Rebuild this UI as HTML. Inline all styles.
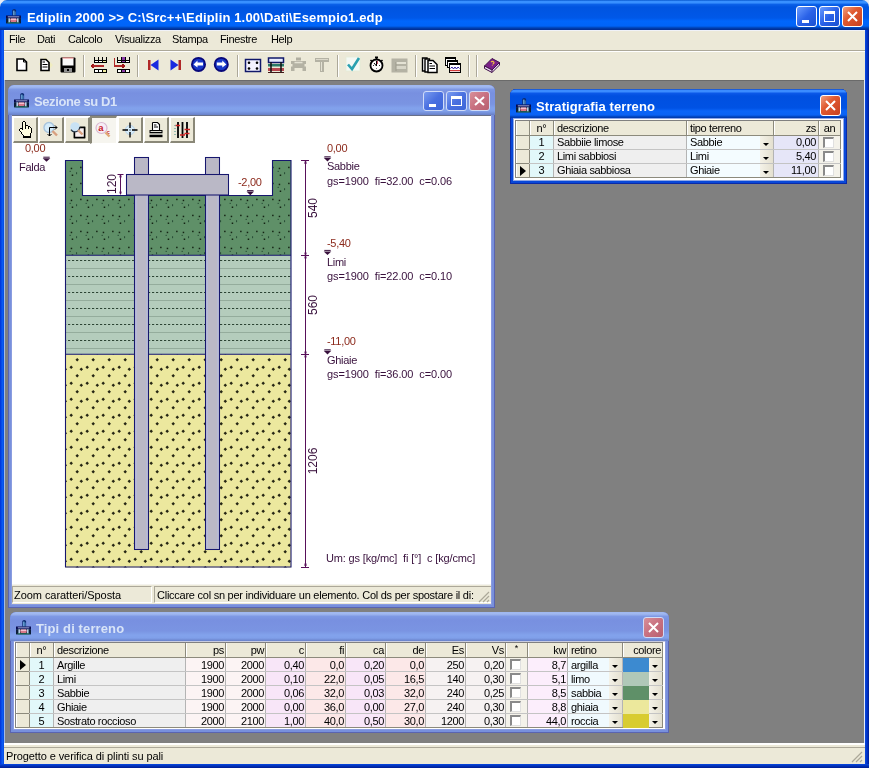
<!DOCTYPE html><html><head><meta charset="utf-8"><style>
*{box-sizing:border-box;margin:0;padding:0}
html,body{width:869px;height:768px;overflow:hidden;background:#808080}
body{position:relative;font-family:"Liberation Sans",sans-serif;font-size:11px;color:#000}
.a{position:absolute}
.t{position:absolute;white-space:nowrap;line-height:13px;will-change:transform}
.m{letter-spacing:-0.35px}
.tt{will-change:transform;position:absolute;white-space:nowrap;color:#fff;font-weight:bold;font-size:13px;line-height:15px}
svg{position:absolute;overflow:visible}
</style></head><body>
<div class="a" style="left:0;top:0;width:869px;height:10px;background:#e8eaf0"></div>
<div class="a" style="left:0;top:0;width:869px;height:30px;border-radius:7px 7px 0 0;background:linear-gradient(#0050c8 0px,#3890ff 1.2px,#3890ff 2.8px,#0a60e8 4.5px,#0054e0 7px,#0058e8 18px,#0066fc 21px,#0064f8 26px,#0040b0 28px,#002a90 30px)"></div>
<div class="a" style="left:0;top:0;width:3px;height:3px;background:#e8ecf8;border-bottom-right-radius:3px"></div>
<div class="a" style="left:0;top:30px;width:4px;height:738px;background:linear-gradient(90deg,#0030d8,#0a5cf4 60%,#0848e0)"></div>
<div class="a" style="left:865px;top:30px;width:4px;height:738px;background:linear-gradient(90deg,#0848e0,#0030c0 60%,#001c90)"></div>
<div class="a" style="left:0;top:764px;width:869px;height:4px;background:linear-gradient(#0848e0,#0030b8,#001c90)"></div>
<svg style="left:6px;top:8.5px" width="16" height="16" viewBox="0 0 16 16">
<path d="M6.3 6.6 V1.6 Q6.3 0 8.2 0 Q10.1 0 10.1 1.6 V6.6Z" fill="#0c2a70"/><rect x="7.3" y="1.6" width="1.1" height="5" fill="#88ccf4"/><rect x="8.7" y="2.5" width="0.8" height="4" fill="#5aa0d8"/>
<rect x="0" y="6.5" width="15" height="2.7" fill="#060a50"/><rect x="1.8" y="7.4" width="11.5" height="0.9" fill="#b0b8e8"/>
<rect x="0" y="9.2" width="15" height="5.2" fill="#0c1e3a"/><rect x="2.4" y="9.3" width="1.6" height="4.2" fill="#b8d0e8"/><rect x="11" y="9.3" width="1.6" height="4.2" fill="#b8d0e8"/>
<rect x="4.3" y="9.4" width="6.4" height="3.6" rx="1" fill="#d87888"/><rect x="4.8" y="9.6" width="5.4" height="1.3" fill="#f8c8d8"/>
<rect x="1.5" y="13.4" width="12" height="1" fill="#2a8060"/></svg>
<div class="tt" style="left:27px;top:10px;letter-spacing:0.15px">Ediplin 2000 &gt;&gt; C:\Src++\Ediplin 1.00\Dati\Esempio1.edp</div>
<div class="a" style="left:796px;top:6px;width:21px;height:21px;border:1px solid #fff;border-radius:3px;background:linear-gradient(135deg,#6a9cff,#2a62e8 50%,#1a50d0)"><div class="a" style="left:5px;top:13px;width:7px;height:3px;background:#fff"></div></div>
<div class="a" style="left:819px;top:6px;width:21px;height:21px;border:1px solid #fff;border-radius:3px;background:linear-gradient(135deg,#6a9cff,#2a62e8 50%,#1a50d0)"><div class="a" style="left:4px;top:4px;width:11px;height:11px;border:1px solid #fff;border-top-width:3px"></div></div>
<div class="a" style="left:842px;top:6px;width:21px;height:21px;border:1px solid #fff;border-radius:3px;background:linear-gradient(135deg,#f0a080,#e05a30 40%,#c84020)"><svg style="left:0;top:0" width="19" height="19"><path d="M5 5 L14 14 M14 5 L5 14" stroke="#fff" stroke-width="2"/></svg></div>
<div class="a" style="left:4px;top:30px;width:861px;height:20px;background:#ece9d8"></div>
<div class="a" style="left:4px;top:30px;width:861px;height:1px;background:#f0f2f8"></div>
<div class="t m" style="left:9px;top:33px">File</div>
<div class="t m" style="left:37px;top:33px">Dati</div>
<div class="t m" style="left:68px;top:33px">Calcolo</div>
<div class="t m" style="left:115px;top:33px">Visualizza</div>
<div class="t m" style="left:172px;top:33px">Stampa</div>
<div class="t m" style="left:220px;top:33px">Finestre</div>
<div class="t m" style="left:271px;top:33px">Help</div>
<div class="a" style="left:4px;top:50px;width:861px;height:1px;background:#aca899"></div>
<div class="a" style="left:4px;top:51px;width:861px;height:1px;background:#fff"></div>
<div class="a" style="left:4px;top:52px;width:861px;height:28px;background:#ece9d8"></div>
<div class="a" style="left:83px;top:55px;width:1px;height:22px;background:#aca899"></div><div class="a" style="left:84px;top:55px;width:1px;height:22px;background:#fff"></div>
<div class="a" style="left:137px;top:55px;width:1px;height:22px;background:#aca899"></div><div class="a" style="left:138px;top:55px;width:1px;height:22px;background:#fff"></div>
<div class="a" style="left:237px;top:55px;width:1px;height:22px;background:#aca899"></div><div class="a" style="left:238px;top:55px;width:1px;height:22px;background:#fff"></div>
<div class="a" style="left:337px;top:55px;width:1px;height:22px;background:#aca899"></div><div class="a" style="left:338px;top:55px;width:1px;height:22px;background:#fff"></div>
<div class="a" style="left:415px;top:55px;width:1px;height:22px;background:#aca899"></div><div class="a" style="left:416px;top:55px;width:1px;height:22px;background:#fff"></div>
<div class="a" style="left:468px;top:55px;width:1px;height:22px;background:#aca899"></div><div class="a" style="left:469px;top:55px;width:1px;height:22px;background:#fff"></div>
<div class="a" style="left:476px;top:55px;width:1px;height:22px;background:#aca899"></div><div class="a" style="left:477px;top:55px;width:1px;height:22px;background:#fff"></div>
<svg style="left:16px;top:58px" width="12" height="14" viewBox="0 0 12 14"><path d="M1 1 H7.5 L10.5 4 V12.5 H1 Z" fill="#fff" stroke="#000" stroke-width="1.6"/><path d="M7.5 1 V4 H10.5" fill="none" stroke="#000" stroke-width="1"/></svg><svg style="left:36px;top:56px" width="18" height="17" viewBox="0 0 18 17"><path d="M9 1 L17 9 L11 16 L3 8Z" fill="#f4f0b0" opacity="0.6"/><path d="M5 3.5 H10 L13 6.5 V14.5 H5 Z" fill="#fff" stroke="#000" stroke-width="1.6"/><path d="M6.5 6 H9 M6.5 8.5 H11.5 M6.5 11 H11.5" stroke="#000" stroke-width="1.2"/></svg><svg style="left:60px;top:57px" width="16" height="16" viewBox="0 0 16 16"><path d="M0.5 1.5 Q0.5 0.5 1.5 0.5 H14.5 Q15.5 0.5 15.5 1.5 V14.5 Q15.5 15.5 14.5 15.5 H1.5 Q0.5 15.5 0.5 14.5Z" fill="#000"/><rect x="2.5" y="1" width="11" height="7.5" fill="#fafafa"/><rect x="2.5" y="0.5" width="11" height="1" fill="#f08080"/><rect x="4" y="11" width="8" height="4" fill="#909090"/><rect x="7" y="12" width="2" height="2" fill="#000"/></svg><svg style="left:90px;top:57px" width="17" height="16" viewBox="0 0 17 16"><g shape-rendering="crispEdges"><rect x="4" y="0" width="1" height="1" fill="#000"/><rect x="8" y="0" width="1" height="1" fill="#000"/><rect x="12" y="0" width="1" height="1" fill="#000"/><rect x="16" y="0" width="1" height="1" fill="#000"/><rect x="4" y="1" width="1" height="1" fill="#000"/><rect x="8" y="1" width="1" height="1" fill="#000"/><rect x="12" y="1" width="1" height="1" fill="#000"/><rect x="16" y="1" width="1" height="1" fill="#000"/><rect x="4" y="2" width="1" height="1" fill="#000"/><rect x="8" y="2" width="1" height="1" fill="#000"/><rect x="12" y="2" width="1" height="1" fill="#000"/><rect x="16" y="2" width="1" height="1" fill="#000"/><rect x="4" y="3" width="13" height="1" fill="#000"/><rect x="4" y="4" width="1" height="1" fill="#000"/><rect x="5" y="4" width="3" height="1" fill="#fff"/><rect x="8" y="4" width="1" height="1" fill="#000"/><rect x="9" y="4" width="3" height="1" fill="#fff"/><rect x="12" y="4" width="1" height="1" fill="#000"/><rect x="13" y="4" width="3" height="1" fill="#f0eca0"/><rect x="16" y="4" width="1" height="1" fill="#000"/><rect x="4" y="5" width="13" height="1" fill="#000"/><rect x="2" y="7" width="2" height="1" fill="#a01818"/><rect x="1" y="8" width="2" height="1" fill="#a01818"/><rect x="3" y="8" width="11" height="1" fill="#b02828"/><rect x="1" y="9" width="2" height="1" fill="#a01818"/><rect x="3" y="9" width="11" height="1" fill="#b02828"/><rect x="2" y="10" width="2" height="1" fill="#a01818"/><rect x="4" y="12" width="13" height="1" fill="#000"/><rect x="4" y="13" width="1" height="1" fill="#000"/><rect x="5" y="13" width="3" height="1" fill="#fff"/><rect x="8" y="13" width="1" height="1" fill="#000"/><rect x="9" y="13" width="3" height="1" fill="#fff"/><rect x="12" y="13" width="1" height="1" fill="#000"/><rect x="13" y="13" width="3" height="1" fill="#f0eca0"/><rect x="16" y="13" width="1" height="1" fill="#000"/><rect x="4" y="14" width="1" height="1" fill="#000"/><rect x="5" y="14" width="3" height="1" fill="#fff"/><rect x="8" y="14" width="1" height="1" fill="#000"/><rect x="9" y="14" width="3" height="1" fill="#fff"/><rect x="12" y="14" width="1" height="1" fill="#000"/><rect x="13" y="14" width="3" height="1" fill="#f0eca0"/><rect x="16" y="14" width="1" height="1" fill="#000"/><rect x="4" y="15" width="13" height="1" fill="#000"/></g></svg><svg style="left:113px;top:57px" width="17" height="16" viewBox="0 0 17 16"><g shape-rendering="crispEdges"><rect x="4" y="0" width="1" height="1" fill="#000"/><rect x="8" y="0" width="1" height="1" fill="#000"/><rect x="9" y="0" width="3" height="1" fill="#8a3aa8"/><rect x="12" y="0" width="1" height="1" fill="#000"/><rect x="16" y="0" width="1" height="1" fill="#000"/><rect x="1" y="1" width="1" height="1" fill="#b02828"/><rect x="4" y="1" width="1" height="1" fill="#000"/><rect x="8" y="1" width="1" height="1" fill="#000"/><rect x="9" y="1" width="3" height="1" fill="#8a3aa8"/><rect x="12" y="1" width="1" height="1" fill="#000"/><rect x="16" y="1" width="1" height="1" fill="#000"/><rect x="1" y="2" width="1" height="1" fill="#b02828"/><rect x="4" y="2" width="1" height="1" fill="#000"/><rect x="8" y="2" width="1" height="1" fill="#000"/><rect x="9" y="2" width="3" height="1" fill="#8a3aa8"/><rect x="12" y="2" width="1" height="1" fill="#000"/><rect x="16" y="2" width="1" height="1" fill="#000"/><rect x="1" y="3" width="1" height="1" fill="#b02828"/><rect x="4" y="3" width="13" height="1" fill="#000"/><rect x="1" y="4" width="1" height="1" fill="#b02828"/><rect x="4" y="4" width="1" height="1" fill="#000"/><rect x="5" y="4" width="3" height="1" fill="#fff"/><rect x="8" y="4" width="1" height="1" fill="#000"/><rect x="9" y="4" width="3" height="1" fill="#8a3aa8"/><rect x="12" y="4" width="1" height="1" fill="#000"/><rect x="13" y="4" width="3" height="1" fill="#fff"/><rect x="16" y="4" width="1" height="1" fill="#000"/><rect x="1" y="5" width="1" height="1" fill="#b02828"/><rect x="4" y="5" width="13" height="1" fill="#000"/><rect x="1" y="6" width="1" height="1" fill="#b02828"/><rect x="1" y="7" width="1" height="1" fill="#b02828"/><rect x="9" y="7" width="2" height="1" fill="#a01818"/><rect x="1" y="8" width="8" height="1" fill="#b02828"/><rect x="9" y="8" width="3" height="1" fill="#a01818"/><rect x="1" y="9" width="8" height="1" fill="#b02828"/><rect x="9" y="9" width="3" height="1" fill="#a01818"/><rect x="9" y="10" width="2" height="1" fill="#a01818"/><rect x="4" y="12" width="13" height="1" fill="#000"/><rect x="4" y="13" width="1" height="1" fill="#000"/><rect x="5" y="13" width="3" height="1" fill="#fff"/><rect x="8" y="13" width="1" height="1" fill="#000"/><rect x="9" y="13" width="3" height="1" fill="#8a3aa8"/><rect x="12" y="13" width="1" height="1" fill="#000"/><rect x="13" y="13" width="3" height="1" fill="#fff"/><rect x="16" y="13" width="1" height="1" fill="#000"/><rect x="4" y="14" width="1" height="1" fill="#000"/><rect x="5" y="14" width="3" height="1" fill="#fff"/><rect x="8" y="14" width="1" height="1" fill="#000"/><rect x="9" y="14" width="3" height="1" fill="#8a3aa8"/><rect x="12" y="14" width="1" height="1" fill="#000"/><rect x="13" y="14" width="3" height="1" fill="#fff"/><rect x="16" y="14" width="1" height="1" fill="#000"/><rect x="4" y="15" width="13" height="1" fill="#000"/></g></svg><svg style="left:147px;top:59px" width="13" height="12" viewBox="0 0 13 12"><rect x="1" y="1" width="2.5" height="10" fill="#b02828"/><path d="M11.5 0.5 V11.5 L3.5 6Z" fill="#1a2ae0"/></svg><svg style="left:169px;top:59px" width="14" height="12" viewBox="0 0 14 12"><rect x="9.5" y="1" width="2.5" height="10" fill="#b02828"/><path d="M1.5 0.5 V11.5 L9.5 6Z" fill="#1a2ae0"/></svg><svg style="left:190px;top:56px" width="17" height="17" viewBox="0 0 17 17"><circle cx="8.5" cy="8.4" r="6.6" fill="#1838c8" stroke="#08087a" stroke-width="1.8"/><path d="M3.5 8.4 L7.5 4.5 V6.5 H13.0 V9.5 H7.5 V11.5Z" fill="#fff"/></svg><svg style="left:213px;top:56px" width="17" height="17" viewBox="0 0 17 17"><circle cx="8.300000000000011" cy="8.4" r="6.6" fill="#1838c8" stroke="#08087a" stroke-width="1.8"/><path d="M13.300000000000011 8.4 L9.300000000000011 4.5 V6.5 H3.8000000000000114 V9.5 H9.300000000000011 V11.5Z" fill="#fff"/></svg><svg style="left:244px;top:58px" width="18" height="15" viewBox="0 0 18 15"><rect x="1.5" y="1.5" width="15" height="12" fill="#f4f2ff" stroke="#10186a" stroke-width="1.5"/><circle cx="5" cy="4.8" r="1.3"/><circle cx="13" cy="4.8" r="1.3"/><circle cx="5" cy="10.5" r="1.3"/><circle cx="13" cy="10.5" r="1.3"/></svg><svg style="left:267px;top:57px" width="18" height="17" viewBox="0 0 18 17"><rect x="1.5" y="1" width="15" height="4.5" fill="#e8ecff" stroke="#10186a" stroke-width="1.5"/><rect x="1" y="7" width="16" height="2.5" fill="#2a7a68"/><rect x="1" y="11" width="16" height="3" fill="#b84850"/><path d="M4 5 V16 M14 5 V16" stroke="#101010" stroke-width="1.5"/><path d="M1 15.5 H17" stroke="#401818" stroke-width="1"/></svg><svg style="left:290px;top:57px" width="17" height="15" viewBox="0 0 17 15"><rect x="6" y="0.5" width="5" height="3" fill="#b0aea0"/><path d="M1 4 H16 V7 H1Z M2.5 7 H14.5 V11 H2.5Z M1 9.5 H4.5 V14 H1Z M12.5 9.5 H16 V14 H12.5Z" fill="#b4b2a4"/><rect x="4.5" y="4.8" width="8" height="1.5" fill="#e4e2d4"/></svg><svg style="left:314px;top:57px" width="16" height="16" viewBox="0 0 16 16"><path d="M1 1 H15 V5 H10 V15 H6 V5 H1Z" fill="#b4b2a4"/><path d="M7.5 5 V14" stroke="#e4e2d4" stroke-width="1"/><path d="M2 2.5 H14" stroke="#e4e2d4" stroke-width="0.8"/></svg><svg style="left:345px;top:56px" width="17" height="16" viewBox="0 0 17 16"><rect x="1" y="1" width="14" height="14" fill="#f4f8f4" stroke="#e4ecd8" stroke-width="0.8"/><path d="M3 8.5 L7 13 L14 2" fill="none" stroke="#2aa0b0" stroke-width="2.6"/></svg><svg style="left:368px;top:56px" width="17" height="17" viewBox="0 0 17 17"><circle cx="8.5" cy="9.5" r="6" fill="#fff" stroke="#000" stroke-width="1.8"/><rect x="7" y="0.5" width="3" height="2" fill="#000"/><rect x="8" y="2" width="1" height="2" fill="#000"/><path d="M2.5 4 L4 5.5 M14.5 4 L13 5.5" stroke="#000" stroke-width="1.5"/><path d="M8.5 5 V10 L6 7" stroke="#000" stroke-width="1" fill="none"/><path d="M9.5 5 V8" stroke="#c02040" stroke-width="0.8"/><path d="M5 9.5 H5.8 M11.2 9.5 H12 M8.5 13 V12.5" stroke="#000" stroke-width="1"/></svg><svg style="left:391px;top:58px" width="17" height="15" viewBox="0 0 17 15"><rect x="0.5" y="0.5" width="16" height="14" fill="#b4b2a4"/><rect x="5" y="4" width="10" height="2" fill="#e4e2d4"/><rect x="5" y="8" width="10" height="3" fill="#d8d6c8"/><path d="M5 4 V13" stroke="#9c9a8c" stroke-width="1"/></svg><svg style="left:421px;top:57px" width="18" height="17" viewBox="0 0 18 17"><path d="M1.5 1 H6 V14 H1.5Z" fill="#fff" stroke="#000" stroke-width="1.4"/><path d="M4 2 H8.5 V15 H4Z" fill="#fff" stroke="#000" stroke-width="1.4"/><path d="M7 3.5 H12 L16 7.5 V15.5 H7Z" fill="#fff" stroke="#000" stroke-width="1.5"/><path d="M8.5 9 H14 M8.5 11.5 H14 M8.5 6.5 H11" stroke="#000" stroke-width="1.1"/></svg><svg style="left:444px;top:57px" width="18" height="16" viewBox="0 0 18 16"><g shape-rendering="crispEdges"><rect x="1" y="0" width="11" height="9" fill="#000"/><rect x="2" y="2" width="9" height="6" fill="#fff"/><rect x="3" y="3" width="11" height="8" fill="#000"/><rect x="4" y="5" width="9" height="5" fill="#fff"/><rect x="5" y="6" width="12" height="10" fill="#000"/><rect x="6" y="8" width="10" height="7" fill="#fff"/></g><path d="M6.5 11.5 L8 10 L9.5 12 L11 10 L12.5 12 L14 10 L15.5 11.5" stroke="#3020a0" stroke-width="1" fill="none"/><rect x="6" y="13" width="10" height="1.2" fill="#d03838"/></svg><svg style="left:483px;top:57px" width="18" height="17" viewBox="0 0 18 17"><path d="M1.5 9 L9 1.5 L16.5 5.5 L9 13Z" fill="#7a2088" stroke="#40104a" stroke-width="1"/><path d="M1.5 9 V11.5 L9 15.5 L16.5 8 V5.5 L9 13Z" fill="#e8d8f0" stroke="#40104a" stroke-width="1"/><path d="M9 13 V15.5" stroke="#40104a"/><path d="M8 5 Q10 3.5 11 5.5 Q11 6.8 9.5 7.3 M9.4 8.5 V9" stroke="#f0c040" stroke-width="1.2" fill="none"/></svg>
<div class="a" style="left:4px;top:80px;width:1px;height:663px;background:#a0bae6"></div>
<div class="a" style="left:864px;top:80px;width:1px;height:663px;background:#e4ecf8"></div>
<div class="a" style="left:5px;top:80px;width:859px;height:1px;background:#6a6a6a"></div>
<div class="a" style="left:4px;top:743px;width:861px;height:21px;background:#ece9d8"></div>
<div class="a" style="left:4px;top:743px;width:861px;height:2px;background:#fff"></div>
<div class="a" style="left:4px;top:747px;width:861px;height:1px;background:#aca899"></div>
<div class="t" style="left:6px;top:750px;letter-spacing:-0.1px">Progetto e verifica di plinti su pali</div>
<svg style="left:851px;top:751px" width="12" height="12"><path d="M11 1 L1 11 M11 5 L5 11 M11 9 L9 11" stroke="#aca899" stroke-width="1.2"/></svg>
<div class="a" style="left:8px;top:85px;width:487px;height:523px;background:#7890dc;border-radius:6px 6px 0 0;box-shadow:inset 1px 0 #5a64b0,inset -1px 0 #5a64b0,inset 0 -1px #5a64b0"></div><div class="a" style="left:11px;top:115px;width:481px;height:490px;background:#8a9ce0"></div><div class="a" style="left:8px;top:85px;width:487px;height:30px;background:linear-gradient(#a0b8f0 0px,#a0b8f0 2px,#7e98e4 4.5px,#7890e0 8px,#7a94e2 19px,#82a2ec 23px,#80a0ea 26px,#6880c8 30px);border-radius:6px 6px 0 0"></div><svg style="left:14px;top:92.5px" width="16" height="16" viewBox="0 0 16 16">
<path d="M6.3 6.6 V1.6 Q6.3 0 8.2 0 Q10.1 0 10.1 1.6 V6.6Z" fill="#0c2a70"/><rect x="7.3" y="1.6" width="1.1" height="5" fill="#88ccf4"/><rect x="8.7" y="2.5" width="0.8" height="4" fill="#5aa0d8"/>
<rect x="0" y="6.5" width="15" height="2.7" fill="#060a50"/><rect x="1.8" y="7.4" width="11.5" height="0.9" fill="#b0b8e8"/>
<rect x="0" y="9.2" width="15" height="5.2" fill="#0c1e3a"/><rect x="2.4" y="9.3" width="1.6" height="4.2" fill="#b8d0e8"/><rect x="11" y="9.3" width="1.6" height="4.2" fill="#b8d0e8"/>
<rect x="4.3" y="9.4" width="6.4" height="3.6" rx="1" fill="#d87888"/><rect x="4.8" y="9.6" width="5.4" height="1.3" fill="#f8c8d8"/>
<rect x="1.5" y="13.4" width="12" height="1" fill="#2a8060"/></svg><div class="tt" style="left:34px;top:94px;color:#d8e4f8;letter-spacing:-0.4px">Sezione su D1</div><div class="a" style="left:423px;top:91px;width:21px;height:20px;border:1px solid #d0dcf8;border-radius:3px;background:linear-gradient(135deg,#7a9cf0,#4a70e0 50%,#3e66d8)"><div class="a" style="left:5px;top:12px;width:7px;height:3px;background:#fff"></div></div><div class="a" style="left:446px;top:91px;width:21px;height:20px;border:1px solid #d0dcf8;border-radius:3px;background:linear-gradient(135deg,#7a9cf0,#4a70e0 50%,#3e66d8)"><div class="a" style="left:4px;top:4px;width:11px;height:10px;border:1px solid #fff;border-top-width:3px"></div></div><div class="a" style="left:469px;top:91px;width:21px;height:20px;border:1px solid #d0dcf8;border-radius:3px;background:linear-gradient(135deg,#d89098,#c87080 50%,#b86070)"><svg style="left:0;top:0" width="19" height="18"><path d="M5 5 L14 13 M14 5 L5 13" stroke="#fff" stroke-width="2"/></svg></div><div class="a" style="left:12px;top:115px;width:479px;height:489px;background:#fff"></div><div class="a" style="left:12px;top:115px;width:479px;height:1px;background:#687088"></div><div class="a" style="left:13px;top:117px;width:25px;height:26px;background:#ece9d8;border-top:1px solid #fff;border-left:1px solid #fff;border-right:2px solid #8a8878;border-bottom:2px solid #8a8878"></div><svg style="left:13px;top:118px" width="24" height="24" viewBox="0 0 24 24"><g transform="translate(6,3)" shape-rendering="crispEdges"><rect x="4" y="0" width="2" height="1" fill="#000"/><rect x="3" y="1" width="1" height="1" fill="#000"/><rect x="4" y="1" width="2" height="1" fill="#fffde0"/><rect x="6" y="1" width="1" height="1" fill="#000"/><rect x="3" y="2" width="1" height="1" fill="#000"/><rect x="4" y="2" width="2" height="1" fill="#fffde0"/><rect x="6" y="2" width="1" height="1" fill="#000"/><rect x="3" y="3" width="1" height="1" fill="#000"/><rect x="4" y="3" width="2" height="1" fill="#fffde0"/><rect x="6" y="3" width="1" height="1" fill="#000"/><rect x="3" y="4" width="1" height="1" fill="#000"/><rect x="4" y="4" width="2" height="1" fill="#fffde0"/><rect x="6" y="4" width="3" height="1" fill="#000"/><rect x="3" y="5" width="1" height="1" fill="#000"/><rect x="4" y="5" width="2" height="1" fill="#fffde0"/><rect x="6" y="5" width="1" height="1" fill="#000"/><rect x="7" y="5" width="2" height="1" fill="#fffde0"/><rect x="9" y="5" width="2" height="1" fill="#000"/><rect x="3" y="6" width="1" height="1" fill="#000"/><rect x="4" y="6" width="2" height="1" fill="#fffde0"/><rect x="6" y="6" width="1" height="1" fill="#000"/><rect x="7" y="6" width="2" height="1" fill="#fffde0"/><rect x="9" y="6" width="1" height="1" fill="#000"/><rect x="10" y="6" width="1" height="1" fill="#fffde0"/><rect x="11" y="6" width="1" height="1" fill="#000"/><rect x="1" y="7" width="3" height="1" fill="#000"/><rect x="4" y="7" width="2" height="1" fill="#fffde0"/><rect x="6" y="7" width="1" height="1" fill="#000"/><rect x="7" y="7" width="2" height="1" fill="#fffde0"/><rect x="9" y="7" width="1" height="1" fill="#000"/><rect x="10" y="7" width="2" height="1" fill="#fffde0"/><rect x="12" y="7" width="1" height="1" fill="#000"/><rect x="0" y="8" width="1" height="1" fill="#000"/><rect x="1" y="8" width="2" height="1" fill="#fffde0"/><rect x="3" y="8" width="1" height="1" fill="#000"/><rect x="4" y="8" width="8" height="1" fill="#fffde0"/><rect x="12" y="8" width="1" height="1" fill="#000"/><rect x="0" y="9" width="1" height="1" fill="#000"/><rect x="1" y="9" width="11" height="1" fill="#fffde0"/><rect x="12" y="9" width="1" height="1" fill="#000"/><rect x="1" y="10" width="1" height="1" fill="#000"/><rect x="2" y="10" width="10" height="1" fill="#fffde0"/><rect x="12" y="10" width="1" height="1" fill="#000"/><rect x="2" y="11" width="1" height="1" fill="#000"/><rect x="3" y="11" width="9" height="1" fill="#fffde0"/><rect x="12" y="11" width="1" height="1" fill="#000"/><rect x="2" y="12" width="1" height="1" fill="#000"/><rect x="3" y="12" width="8" height="1" fill="#fffde0"/><rect x="11" y="12" width="1" height="1" fill="#000"/><rect x="3" y="13" width="1" height="1" fill="#000"/><rect x="4" y="13" width="7" height="1" fill="#fffde0"/><rect x="11" y="13" width="1" height="1" fill="#000"/><rect x="4" y="14" width="1" height="1" fill="#000"/><rect x="5" y="14" width="6" height="1" fill="#fffde0"/><rect x="11" y="14" width="1" height="1" fill="#000"/><rect x="4" y="15" width="8" height="1" fill="#000"/><rect x="4" y="16" width="8" height="1" fill="#000"/></g></svg><div class="a" style="left:39px;top:117px;width:25px;height:26px;background:#ece9d8;border-top:1px solid #fff;border-left:1px solid #fff;border-right:2px solid #8a8878;border-bottom:2px solid #8a8878"></div><svg style="left:39px;top:118px" width="24" height="24" viewBox="0 0 24 24"><circle cx="10" cy="9.5" r="5" fill="#d4ecfa" stroke="#a8c4dc" stroke-width="1.4"/><path d="M13.5 13 L18 17.5" stroke="#d8a080" stroke-width="2.4"/><path d="M10.5 9.5 H18 M16 7.5 L18 9.5 L16 11.5 M10.5 9.5 V18 M8.5 16 L10.5 18 L12.5 16" stroke="#000" stroke-width="1" fill="none"/></svg><div class="a" style="left:65px;top:117px;width:25px;height:26px;background:#ece9d8;border-top:1px solid #fff;border-left:1px solid #fff;border-right:2px solid #8a8878;border-bottom:2px solid #8a8878"></div><svg style="left:65px;top:118px" width="24" height="24" viewBox="0 0 24 24"><rect x="9.5" y="9.5" width="10" height="10" fill="#fff" stroke="#000" stroke-width="1.6"/><path d="M9.5 9.5 H19.5 V19.5 H9.5Z" fill="#f8f0f0"/><path d="M9.5 9.5 H19.5 V19.5 H9.5Z" fill="none" stroke="#000" stroke-width="1.4"/><circle cx="10" cy="9" r="4.8" fill="#c8e2f4" stroke="#283848" stroke-width="1.3" stroke-dasharray="12 30"/><path d="M13 12 L17.5 16.5" stroke="#d8a080" stroke-width="2.4"/></svg><div class="a" style="left:90px;top:116px;width:27px;height:28px;background:#f6f5ef;border-top:2px solid #8a8878;border-left:2px solid #8a8878;border-right:1px solid #fff;border-bottom:1px solid #fff"></div><svg style="left:91px;top:118px" width="24" height="24" viewBox="0 0 24 24"><circle cx="10.5" cy="10" r="5.5" fill="#f6eef6" stroke="#d8b8d0" stroke-width="1.2"/><text x="7.2" y="13" font-size="9.5" font-weight="bold" fill="#c81828" font-family="Liberation Sans">a</text><text x="15.5" y="16" font-size="6" font-weight="bold" fill="#c81828" font-family="Liberation Sans">c</text><path d="M14.5 14.5 L18.5 18.5" stroke="#e0a878" stroke-width="2.4"/></svg><div class="a" style="left:118px;top:117px;width:25px;height:26px;background:#ece9d8;border-top:1px solid #fff;border-left:1px solid #fff;border-right:2px solid #8a8878;border-bottom:2px solid #8a8878"></div><svg style="left:118px;top:118px" width="24" height="24" viewBox="0 0 24 24"><circle cx="12" cy="12" r="4.6" fill="#d8ecf8" stroke="#b8d4ec" stroke-width="1"/><path d="M12 4.5 V10 M12 14 V19.5 M4.5 12 H10 M14 12 H19.5" stroke="#000" stroke-width="1.4"/><rect x="11.4" y="11.4" width="1.2" height="1.2" fill="#304050"/></svg><div class="a" style="left:144px;top:117px;width:25px;height:26px;background:#ece9d8;border-top:1px solid #fff;border-left:1px solid #fff;border-right:2px solid #8a8878;border-bottom:2px solid #8a8878"></div><svg style="left:144px;top:118px" width="24" height="24" viewBox="0 0 24 24"><path d="M8.5 4.5 H13.5 L15.5 6.5 V12 H8.5Z" fill="#fff"/><path d="M8.5 4.5 H13.5 L15.5 6.5 V12 M8.5 12 V4.5" fill="none" stroke="#000" stroke-width="1.1"/><path d="M10 7 H12.5 M10 9 H14" stroke="#000" stroke-width="1"/><rect x="5.5" y="12" width="13" height="3" fill="#000"/><rect x="6.5" y="13" width="11" height="1" fill="#e0e0d8"/><rect x="5.5" y="15" width="13" height="2" fill="#a8a8a0"/><rect x="5.5" y="17" width="13" height="2.2" fill="#000"/></svg><div class="a" style="left:170px;top:117px;width:25px;height:26px;background:#ece9d8;border-top:1px solid #fff;border-left:1px solid #fff;border-right:2px solid #8a8878;border-bottom:2px solid #8a8878"></div><svg style="left:170px;top:118px" width="24" height="24" viewBox="0 0 24 24"><path d="M8 4 V20 M12.5 4 V20 M17 4 V20" stroke="#000" stroke-width="1.8"/><path d="M5.5 7.5 H10 M14.5 11.5 H20 M10 17 H15 M14.5 15.5 H19.5" stroke="#d02020" stroke-width="1.6"/><path d="M5 7 V19" stroke="#509890" stroke-width="1.5" stroke-dasharray="0.8 2.2"/></svg><svg style="left:0;top:0" width="869" height="768" viewBox="0 0 869 768"><defs><pattern id="psab" patternUnits="userSpaceOnUse" x="0" y="0" width="16" height="16"><rect width="16" height="16" fill="#5f9068"/><rect x="0.1" y="6.7" width="1.5" height="1.5" fill="#142414"/><rect x="6.7" y="7.7" width="1.5" height="1.5" fill="#142414"/><rect x="7.7" y="14.5" width="1.5" height="1.5" fill="#142414"/><rect x="5.6" y="10.8" width="1.2" height="1.2" fill="#2a5038"/><rect x="12" y="12.2" width="1.1" height="2" fill="#2a5038"/></pattern><pattern id="pgh" patternUnits="userSpaceOnUse" x="0" y="0" width="16" height="16"><rect width="16" height="16" fill="#ece89e"/><path d="M13.2 5.95 L14.95 7.7 L13.2 9.45 L11.45 7.7Z M7.2 13.55 L8.95 15.3 L7.2 17.05 L5.45 15.3Z M7.2 -2.45 L8.95 -0.7 L7.2 1.05 L5.45 -0.7Z M1.3 -0.44999999999999996 L3.05 1.3 L1.3 3.05 L-0.44999999999999996 1.3Z M17.3 -0.44999999999999996 L19.05 1.3 L17.3 3.05 L15.55 1.3Z M-2.8 5.95 L-1.0499999999999998 7.7 L-2.8 9.45 L-4.55 7.7Z M1.3 15.55 L3.05 17.3 L1.3 19.05 L-0.44999999999999996 17.3Z " fill="#262614"/></pattern><pattern id="plim" patternUnits="userSpaceOnUse" x="0" y="0" width="4" height="16"><rect width="4" height="16" fill="#b4ccbc"/><rect x="0" y="4" width="2.2" height="1" fill="#2c4434"/><rect x="0" y="12" width="4" height="1" fill="#94ac9c"/></pattern><clipPath id="cl"><rect x="12" y="144" width="479" height="441"/></clipPath></defs><g clip-path="url(#cl)"><path d="M65.5 160.5 H82.5 V195.5 H272.5 V160.5 H291 V255.5 H65.5 Z" fill="url(#psab)"/><rect x="65.5" y="255.5" width="225.5" height="99" fill="url(#plim)"/><rect x="65.5" y="354.5" width="225.5" height="213" fill="url(#pgh)"/><path d="M65.5 160.5 H82.5 V195.5 H272.5 V160.5 H291 V567 H65.5 Z M65.5 255.2 H291 M65.5 354.3 H291" fill="none" stroke="#16166e" stroke-width="1.1"/><rect x="134.5" y="157.5" width="14" height="392" fill="#bab8c6" stroke="#16166e" stroke-width="1.05"/><rect x="135.5" y="196" width="1.2" height="353" fill="#b4bce8" opacity="0.8"/><rect x="146.3" y="196" width="1.2" height="353" fill="#b4bce8" opacity="0.6"/><rect x="205.5" y="157.5" width="14" height="392" fill="#bab8c6" stroke="#16166e" stroke-width="1.05"/><rect x="206.5" y="196" width="1.2" height="353" fill="#b4bce8" opacity="0.8"/><rect x="217.3" y="196" width="1.2" height="353" fill="#b4bce8" opacity="0.6"/><rect x="126.5" y="174.5" width="102" height="20.5" fill="#bab8c6" stroke="#16166e" stroke-width="1.05"/><path d="M305.5 160 V567.5 M301 160.5 H309 M301 255.5 H309 M301 354.5 H309 M301 567.5 H309" stroke="#58105a" stroke-width="1"/><rect x="304.5" y="161.5" width="2" height="2.5" fill="#58105a"/><rect x="304.5" y="252.5" width="2" height="2" fill="#58105a"/><rect x="304.5" y="256.5" width="2" height="2" fill="#58105a"/><rect x="304.5" y="351.5" width="2" height="2" fill="#58105a"/><rect x="304.5" y="355.5" width="2" height="2" fill="#58105a"/><rect x="304.5" y="563.5" width="2" height="2.5" fill="#58105a"/><path d="M120.5 174.5 V194.5 M117.5 174.5 H123.5" stroke="#58105a" stroke-width="1"/><rect x="119.5" y="175.5" width="2" height="2" fill="#58105a"/><rect x="119.5" y="191.5" width="2" height="2" fill="#58105a"/><path d="M42.7 158.2 H50.3 L46.5 161.79999999999998 Z" fill="#38103c"/><path d="M43.3 157.2 H49.7" stroke="#38103c" stroke-width="1"/><path d="M323.7 157.8 H331.3 L327.5 161.4 Z" fill="#38103c"/><path d="M324.3 156.8 H330.7" stroke="#38103c" stroke-width="1"/><path d="M323.7 251.4 H331.3 L327.5 255.0 Z" fill="#38103c"/><path d="M324.3 250.4 H330.7" stroke="#38103c" stroke-width="1"/><path d="M323.7 350.8 H331.3 L327.5 354.40000000000003 Z" fill="#38103c"/><path d="M324.3 349.8 H330.7" stroke="#38103c" stroke-width="1"/><path d="M246.5 191.6 H254.10000000000002 L250.3 195.2 Z" fill="#38103c"/><path d="M247.10000000000002 190.6 H253.5" stroke="#38103c" stroke-width="1"/></g></svg><div class="t" style="left:25px;top:142px;color:#8c2a1c;letter-spacing:-0.3px">0,00</div><div class="t" style="left:19px;top:161px;color:#38103c;letter-spacing:-0.3px">Falda</div><div class="t" style="left:238px;top:176px;color:#8c2a1c;letter-spacing:-0.3px">-2,00</div><div class="t" style="left:327px;top:142px;color:#8c2a1c;letter-spacing:-0.3px">0,00</div><div class="t" style="left:327px;top:160px;color:#38103c;letter-spacing:-0.3px">Sabbie</div><div class="t" style="left:327px;top:175px;color:#38103c;letter-spacing:-0.1px">gs=1900&nbsp;&nbsp;fi=32.00&nbsp;&nbsp;c=0.06</div><div class="t" style="left:327px;top:237px;color:#8c2a1c;letter-spacing:-0.3px">-5,40</div><div class="t" style="left:327px;top:256px;color:#38103c;letter-spacing:-0.3px">Limi</div><div class="t" style="left:327px;top:270px;color:#38103c;letter-spacing:-0.1px">gs=1900&nbsp;&nbsp;fi=22.00&nbsp;&nbsp;c=0.10</div><div class="t" style="left:327px;top:335px;color:#8c2a1c;letter-spacing:-0.3px">-11,00</div><div class="t" style="left:327px;top:354px;color:#38103c;letter-spacing:-0.3px">Ghiaie</div><div class="t" style="left:327px;top:368px;color:#38103c;letter-spacing:-0.1px">gs=1900&nbsp;&nbsp;fi=36.00&nbsp;&nbsp;c=0.00</div><div class="t" style="left:326px;top:552px;color:#38103c;letter-spacing:-0.15px">Um: gs [kg/mc]&nbsp;&nbsp;fi [°]&nbsp;&nbsp;c [kg/cmc]</div><div class="t" style="left:91.5px;top:177px;width:40px;text-align:center;color:#38103c;font-size:12px;line-height:14px;transform:rotate(-90deg)">120</div><div class="t" style="left:292.5px;top:201px;width:40px;text-align:center;color:#38103c;font-size:12px;line-height:14px;transform:rotate(-90deg)">540</div><div class="t" style="left:292.5px;top:298px;width:40px;text-align:center;color:#38103c;font-size:12px;line-height:14px;transform:rotate(-90deg)">560</div><div class="t" style="left:292.5px;top:453.5px;width:40px;text-align:center;color:#38103c;font-size:12px;line-height:14px;transform:rotate(-90deg)">1206</div><div class="a" style="left:12px;top:584px;width:479px;height:20px;background:#ece9d8"></div><div class="a" style="left:12px;top:584px;width:479px;height:1px;background:#f4f3ee"></div><div class="a" style="left:12px;top:586px;width:140px;height:17px;border-top:1px solid #aca899;border-left:1px solid #aca899;border-bottom:1px solid #fff;border-right:1px solid #fff"></div><div class="a" style="left:154px;top:586px;width:337px;height:17px;border-top:1px solid #aca899;border-left:1px solid #aca899;border-bottom:1px solid #fff"></div><div class="t" style="left:14px;top:589px;letter-spacing:-0.05px">Zoom caratteri/Sposta</div><div class="t" style="left:157px;top:589px;letter-spacing:-0.25px">Cliccare col sn per individuare un elemento. Col ds per spostare il di:</div><svg style="left:478px;top:591px" width="12" height="12"><path d="M11 1 L1 11 M11 5 L5 11 M11 9 L9 11" stroke="#aca899" stroke-width="1.2"/></svg><div class="a" style="left:510px;top:89px;width:337px;height:95px;background:#0848d8;border-radius:6px 6px 0 0;box-shadow:inset 1px 0 #0a2aa8,inset -1px 0 #0a2aa8,inset 0 -1px #0a2aa8"></div><div class="a" style="left:513px;top:118px;width:331px;height:63px;background:#90a8e8"></div><div class="a" style="left:510px;top:89px;width:337px;height:29px;background:linear-gradient(#0a40c0 0px,#3a8cff 1.3px,#3a8cff 2.5px,#0a58e8 4.5px,#0050e0 7px,#0052e4 19px,#0a64f8 22px,#0a62f4 26px,#0040b8 28px,#0038a8 29px);border-radius:6px 6px 0 0"></div><svg style="left:516px;top:97.7px" width="16" height="16" viewBox="0 0 16 16">
<path d="M6.3 6.6 V1.6 Q6.3 0 8.2 0 Q10.1 0 10.1 1.6 V6.6Z" fill="#0c2a70"/><rect x="7.3" y="1.6" width="1.1" height="5" fill="#88ccf4"/><rect x="8.7" y="2.5" width="0.8" height="4" fill="#5aa0d8"/>
<rect x="0" y="6.5" width="15" height="2.7" fill="#060a50"/><rect x="1.8" y="7.4" width="11.5" height="0.9" fill="#b0b8e8"/>
<rect x="0" y="9.2" width="15" height="5.2" fill="#0c1e3a"/><rect x="2.4" y="9.3" width="1.6" height="4.2" fill="#b8d0e8"/><rect x="11" y="9.3" width="1.6" height="4.2" fill="#b8d0e8"/>
<rect x="4.3" y="9.4" width="6.4" height="3.6" rx="1" fill="#d87888"/><rect x="4.8" y="9.6" width="5.4" height="1.3" fill="#f8c8d8"/>
<rect x="1.5" y="13.4" width="12" height="1" fill="#2a8060"/></svg><div class="tt" style="left:536px;top:99px;color:#fff;letter-spacing:0.1px">Stratigrafia terreno</div><div class="a" style="left:820px;top:95px;width:21px;height:21px;border:1px solid #fff;border-radius:3px;background:linear-gradient(135deg,#f0a080,#e05a30 40%,#c84020)"><svg style="left:0;top:0" width="19" height="19"><path d="M5 5 L14 14 M14 5 L5 14" stroke="#fff" stroke-width="2"/></svg></div><div class="a" style="left:514px;top:119px;width:329px;height:61px;background:#fff"></div><div class="a" style="left:515px;top:120px;width:325px;height:57px;background:#ece9d8"></div><div class="a" style="left:516px;top:121px;width:1px;height:14px;background:#fff"></div><div class="a" style="left:516px;top:136px;width:1px;height:13px;background:#fff"></div><div class="a" style="left:516px;top:150px;width:1px;height:13px;background:#fff"></div><div class="a" style="left:516px;top:164px;width:1px;height:13px;background:#fff"></div><div class="a" style="left:530px;top:136px;width:23px;height:41px;background:#e2f8fa"></div><div class="a" style="left:530px;top:121px;width:1px;height:14px;background:#fff"></div><div class="a" style="left:554px;top:136px;width:132px;height:41px;background:#efefef"></div><div class="a" style="left:554px;top:121px;width:1px;height:14px;background:#fff"></div><div class="a" style="left:687px;top:136px;width:86px;height:41px;background:#f4fcff"></div><div class="a" style="left:687px;top:121px;width:1px;height:14px;background:#fff"></div><div class="a" style="left:774px;top:136px;width:44px;height:41px;background:#e6e6f8"></div><div class="a" style="left:774px;top:121px;width:1px;height:14px;background:#fff"></div><div class="a" style="left:819px;top:136px;width:21px;height:41px;background:#f4f2ea"></div><div class="a" style="left:819px;top:121px;width:1px;height:14px;background:#fff"></div><div class="a" style="left:515px;top:120px;width:1px;height:57px;background:#808080"></div><div class="a" style="left:529px;top:120px;width:1px;height:57px;background:#8c8a7c"></div><div class="a" style="left:553px;top:120px;width:1px;height:57px;background:#8c8a7c"></div><div class="a" style="left:686px;top:120px;width:1px;height:57px;background:#8c8a7c"></div><div class="a" style="left:773px;top:120px;width:1px;height:57px;background:#8c8a7c"></div><div class="a" style="left:818px;top:120px;width:1px;height:57px;background:#8c8a7c"></div><div class="a" style="left:840px;top:120px;width:1px;height:57px;background:#8c8a7c"></div><div class="a" style="left:553px;top:136px;width:1px;height:41px;background:#b4b4b4"></div><div class="a" style="left:686px;top:136px;width:1px;height:41px;background:#b4b4b4"></div><div class="a" style="left:773px;top:136px;width:1px;height:41px;background:#b4b4b4"></div><div class="a" style="left:818px;top:136px;width:1px;height:41px;background:#b4b4b4"></div><div class="a" style="left:515px;top:120px;width:326px;height:1px;background:#808080"></div><div class="a" style="left:515px;top:135px;width:326px;height:1px;background:#8c8a7c"></div><div class="a" style="left:515px;top:149px;width:14px;height:1px;background:#8c8a7c"></div><div class="a" style="left:529px;top:149px;width:312px;height:1px;background:#c4c4c4"></div><div class="a" style="left:515px;top:163px;width:14px;height:1px;background:#8c8a7c"></div><div class="a" style="left:529px;top:163px;width:312px;height:1px;background:#c4c4c4"></div><div class="a" style="left:515px;top:177px;width:14px;height:1px;background:#8c8a7c"></div><div class="a" style="left:529px;top:177px;width:312px;height:1px;background:#8c8a7c"></div><div class="t m" style="left:530px;width:23px;text-align:center;top:122px">n°</div><div class="t m" style="left:557px;width:127px;text-align:left;top:122px">descrizione</div><div class="t m" style="left:690px;width:81px;text-align:left;top:122px">tipo terreno</div><div class="t m" style="left:775px;width:41px;text-align:right;top:122px">zs</div><div class="t m" style="left:819px;width:21px;text-align:center;top:122px">an</div><div class="t m" style="left:530px;width:23px;text-align:center;top:136px">1</div><div class="t m" style="left:557px;width:127px;text-align:left;top:136px">Sabbiie limose</div><div class="t m" style="left:690px;width:68px;text-align:left;top:136px">Sabbie</div><div class="t m" style="left:775px;width:41px;text-align:right;top:136px">0,00</div><div class="a" style="left:823px;top:137px;width:11px;height:11px;background:#fff;border-top:2px solid #8a8a8a;border-left:2px solid #8a8a8a;border-right:1px solid #e0e0e0;border-bottom:1px solid #e0e0e0"></div><div class="a" style="left:760px;top:136px;width:13px;height:13px;background:linear-gradient(90deg,#f4f2e8,#e4e0d0)"></div><svg style="left:763px;top:143px" width="6" height="4"><path d="M0 0 H6 L3 3 Z" fill="#000"/></svg><div class="t m" style="left:530px;width:23px;text-align:center;top:150px">2</div><div class="t m" style="left:557px;width:127px;text-align:left;top:150px">Limi sabbiosi</div><div class="t m" style="left:690px;width:68px;text-align:left;top:150px">Limi</div><div class="t m" style="left:775px;width:41px;text-align:right;top:150px">5,40</div><div class="a" style="left:823px;top:151px;width:11px;height:11px;background:#fff;border-top:2px solid #8a8a8a;border-left:2px solid #8a8a8a;border-right:1px solid #e0e0e0;border-bottom:1px solid #e0e0e0"></div><div class="a" style="left:760px;top:150px;width:13px;height:13px;background:linear-gradient(90deg,#f4f2e8,#e4e0d0)"></div><svg style="left:763px;top:157px" width="6" height="4"><path d="M0 0 H6 L3 3 Z" fill="#000"/></svg><div class="t m" style="left:530px;width:23px;text-align:center;top:164px">3</div><div class="t m" style="left:557px;width:127px;text-align:left;top:164px">Ghiaia sabbiosa</div><div class="t m" style="left:690px;width:68px;text-align:left;top:164px">Ghiaie</div><div class="t m" style="left:775px;width:41px;text-align:right;top:164px">11,00</div><div class="a" style="left:823px;top:165px;width:11px;height:11px;background:#fff;border-top:2px solid #8a8a8a;border-left:2px solid #8a8a8a;border-right:1px solid #e0e0e0;border-bottom:1px solid #e0e0e0"></div><div class="a" style="left:760px;top:164px;width:13px;height:13px;background:linear-gradient(90deg,#f4f2e8,#e4e0d0)"></div><svg style="left:763px;top:171px" width="6" height="4"><path d="M0 0 H6 L3 3 Z" fill="#000"/></svg><svg style="left:520px;top:166px" width="6" height="10"><path d="M0 0 L6 5 L0 10 Z" fill="#000"/></svg><div class="a" style="left:10px;top:612px;width:659px;height:121px;background:#7890dc;border-radius:6px 6px 0 0;box-shadow:inset 1px 0 #5a64b0,inset -1px 0 #5a64b0,inset 0 -1px #5a64b0"></div><div class="a" style="left:13px;top:641px;width:653px;height:89px;background:#8a9ce0"></div><div class="a" style="left:10px;top:612px;width:659px;height:29px;background:linear-gradient(#a0b8f0 0px,#a0b8f0 2px,#7e98e4 4.5px,#7890e0 8px,#7a94e2 19px,#82a2ec 23px,#80a0ea 26px,#6880c8 29px);border-radius:6px 6px 0 0"></div><svg style="left:16px;top:619.8px" width="16" height="16" viewBox="0 0 16 16">
<path d="M6.3 6.6 V1.6 Q6.3 0 8.2 0 Q10.1 0 10.1 1.6 V6.6Z" fill="#0c2a70"/><rect x="7.3" y="1.6" width="1.1" height="5" fill="#88ccf4"/><rect x="8.7" y="2.5" width="0.8" height="4" fill="#5aa0d8"/>
<rect x="0" y="6.5" width="15" height="2.7" fill="#060a50"/><rect x="1.8" y="7.4" width="11.5" height="0.9" fill="#b0b8e8"/>
<rect x="0" y="9.2" width="15" height="5.2" fill="#0c1e3a"/><rect x="2.4" y="9.3" width="1.6" height="4.2" fill="#b8d0e8"/><rect x="11" y="9.3" width="1.6" height="4.2" fill="#b8d0e8"/>
<rect x="4.3" y="9.4" width="6.4" height="3.6" rx="1" fill="#d87888"/><rect x="4.8" y="9.6" width="5.4" height="1.3" fill="#f8c8d8"/>
<rect x="1.5" y="13.4" width="12" height="1" fill="#2a8060"/></svg><div class="tt" style="left:36px;top:621px;color:#d8e4f8;letter-spacing:0.12px">Tipi di terreno</div><div class="a" style="left:643px;top:617px;width:21px;height:21px;border:1px solid #d0dcf8;border-radius:3px;background:linear-gradient(135deg,#d89098,#c87080 50%,#b86070)"><svg style="left:0;top:0" width="19" height="19"><path d="M5 5 L14 14 M14 5 L5 14" stroke="#fff" stroke-width="2"/></svg></div><div class="a" style="left:14px;top:641px;width:651px;height:88px;background:#fff"></div><div class="a" style="left:14px;top:641px;width:651px;height:1px;background:#c8cce0"></div><div class="a" style="left:15px;top:642px;width:647px;height:85px;background:#ece9d8"></div><div class="a" style="left:16px;top:643px;width:1px;height:14px;background:#fff"></div><div class="a" style="left:16px;top:658px;width:1px;height:13px;background:#fff"></div><div class="a" style="left:16px;top:672px;width:1px;height:13px;background:#fff"></div><div class="a" style="left:16px;top:686px;width:1px;height:13px;background:#fff"></div><div class="a" style="left:16px;top:700px;width:1px;height:13px;background:#fff"></div><div class="a" style="left:16px;top:714px;width:1px;height:13px;background:#fff"></div><div class="a" style="left:30px;top:658px;width:23px;height:69px;background:#e2f8fa"></div><div class="a" style="left:30px;top:643px;width:1px;height:14px;background:#fff"></div><div class="a" style="left:54px;top:658px;width:131px;height:69px;background:#efefef"></div><div class="a" style="left:54px;top:643px;width:1px;height:14px;background:#fff"></div><div class="a" style="left:186px;top:658px;width:39px;height:69px;background:#fcf4f4"></div><div class="a" style="left:186px;top:643px;width:1px;height:14px;background:#fff"></div><div class="a" style="left:226px;top:658px;width:39px;height:69px;background:#fcf4f4"></div><div class="a" style="left:226px;top:643px;width:1px;height:14px;background:#fff"></div><div class="a" style="left:266px;top:658px;width:39px;height:69px;background:#f8e6f8"></div><div class="a" style="left:266px;top:643px;width:1px;height:14px;background:#fff"></div><div class="a" style="left:306px;top:658px;width:39px;height:69px;background:#fce8e8"></div><div class="a" style="left:306px;top:643px;width:1px;height:14px;background:#fff"></div><div class="a" style="left:346px;top:658px;width:39px;height:69px;background:#f8e6f8"></div><div class="a" style="left:346px;top:643px;width:1px;height:14px;background:#fff"></div><div class="a" style="left:386px;top:658px;width:39px;height:69px;background:#fce8e8"></div><div class="a" style="left:386px;top:643px;width:1px;height:14px;background:#fff"></div><div class="a" style="left:426px;top:658px;width:39px;height:69px;background:#f6f2f2"></div><div class="a" style="left:426px;top:643px;width:1px;height:14px;background:#fff"></div><div class="a" style="left:466px;top:658px;width:39px;height:69px;background:#f6f2f2"></div><div class="a" style="left:466px;top:643px;width:1px;height:14px;background:#fff"></div><div class="a" style="left:506px;top:658px;width:21px;height:69px;background:#f4f2ea"></div><div class="a" style="left:506px;top:643px;width:1px;height:14px;background:#fff"></div><div class="a" style="left:528px;top:658px;width:39px;height:69px;background:#fceefc"></div><div class="a" style="left:528px;top:643px;width:1px;height:14px;background:#fff"></div><div class="a" style="left:568px;top:658px;width:54px;height:69px;background:#f0fafe"></div><div class="a" style="left:568px;top:643px;width:1px;height:14px;background:#fff"></div><div class="a" style="left:623px;top:658px;width:39px;height:69px;background:#f0f0f0"></div><div class="a" style="left:623px;top:643px;width:1px;height:14px;background:#fff"></div><div class="a" style="left:15px;top:642px;width:1px;height:85px;background:#808080"></div><div class="a" style="left:29px;top:642px;width:1px;height:85px;background:#8c8a7c"></div><div class="a" style="left:53px;top:642px;width:1px;height:85px;background:#8c8a7c"></div><div class="a" style="left:185px;top:642px;width:1px;height:85px;background:#8c8a7c"></div><div class="a" style="left:225px;top:642px;width:1px;height:85px;background:#8c8a7c"></div><div class="a" style="left:265px;top:642px;width:1px;height:85px;background:#8c8a7c"></div><div class="a" style="left:305px;top:642px;width:1px;height:85px;background:#8c8a7c"></div><div class="a" style="left:345px;top:642px;width:1px;height:85px;background:#8c8a7c"></div><div class="a" style="left:385px;top:642px;width:1px;height:85px;background:#8c8a7c"></div><div class="a" style="left:425px;top:642px;width:1px;height:85px;background:#8c8a7c"></div><div class="a" style="left:465px;top:642px;width:1px;height:85px;background:#8c8a7c"></div><div class="a" style="left:505px;top:642px;width:1px;height:85px;background:#8c8a7c"></div><div class="a" style="left:527px;top:642px;width:1px;height:85px;background:#8c8a7c"></div><div class="a" style="left:567px;top:642px;width:1px;height:85px;background:#8c8a7c"></div><div class="a" style="left:622px;top:642px;width:1px;height:85px;background:#8c8a7c"></div><div class="a" style="left:662px;top:642px;width:1px;height:85px;background:#8c8a7c"></div><div class="a" style="left:53px;top:658px;width:1px;height:69px;background:#b4b4b4"></div><div class="a" style="left:185px;top:658px;width:1px;height:69px;background:#b4b4b4"></div><div class="a" style="left:225px;top:658px;width:1px;height:69px;background:#b4b4b4"></div><div class="a" style="left:265px;top:658px;width:1px;height:69px;background:#b4b4b4"></div><div class="a" style="left:305px;top:658px;width:1px;height:69px;background:#b4b4b4"></div><div class="a" style="left:345px;top:658px;width:1px;height:69px;background:#b4b4b4"></div><div class="a" style="left:385px;top:658px;width:1px;height:69px;background:#b4b4b4"></div><div class="a" style="left:425px;top:658px;width:1px;height:69px;background:#b4b4b4"></div><div class="a" style="left:465px;top:658px;width:1px;height:69px;background:#b4b4b4"></div><div class="a" style="left:505px;top:658px;width:1px;height:69px;background:#b4b4b4"></div><div class="a" style="left:527px;top:658px;width:1px;height:69px;background:#b4b4b4"></div><div class="a" style="left:567px;top:658px;width:1px;height:69px;background:#b4b4b4"></div><div class="a" style="left:622px;top:658px;width:1px;height:69px;background:#b4b4b4"></div><div class="a" style="left:15px;top:642px;width:648px;height:1px;background:#808080"></div><div class="a" style="left:15px;top:657px;width:648px;height:1px;background:#8c8a7c"></div><div class="a" style="left:15px;top:671px;width:14px;height:1px;background:#8c8a7c"></div><div class="a" style="left:29px;top:671px;width:634px;height:1px;background:#c4c4c4"></div><div class="a" style="left:15px;top:685px;width:14px;height:1px;background:#8c8a7c"></div><div class="a" style="left:29px;top:685px;width:634px;height:1px;background:#c4c4c4"></div><div class="a" style="left:15px;top:699px;width:14px;height:1px;background:#8c8a7c"></div><div class="a" style="left:29px;top:699px;width:634px;height:1px;background:#c4c4c4"></div><div class="a" style="left:15px;top:713px;width:14px;height:1px;background:#8c8a7c"></div><div class="a" style="left:29px;top:713px;width:634px;height:1px;background:#c4c4c4"></div><div class="a" style="left:15px;top:727px;width:14px;height:1px;background:#8c8a7c"></div><div class="a" style="left:29px;top:727px;width:634px;height:1px;background:#8c8a7c"></div><div class="t m" style="left:30px;width:23px;text-align:center;top:644px">n°</div><div class="t m" style="left:57px;width:126px;text-align:left;top:644px">descrizione</div><div class="t m" style="left:187px;width:37px;text-align:right;top:644px">ps</div><div class="t m" style="left:227px;width:37px;text-align:right;top:644px">pw</div><div class="t m" style="left:267px;width:37px;text-align:right;top:644px">c</div><div class="t m" style="left:307px;width:37px;text-align:right;top:644px">fi</div><div class="t m" style="left:347px;width:37px;text-align:right;top:644px">ca</div><div class="t m" style="left:387px;width:37px;text-align:right;top:644px">de</div><div class="t m" style="left:427px;width:37px;text-align:right;top:644px">Es</div><div class="t m" style="left:467px;width:37px;text-align:right;top:644px">Vs</div><div class="t" style="left:506px;width:21px;text-align:center;top:642px;font-size:9px">*</div><div class="t m" style="left:529px;width:37px;text-align:right;top:644px">kw</div><div class="t m" style="left:571px;width:49px;text-align:left;top:644px">retino</div><div class="t m" style="left:624px;width:37px;text-align:right;top:644px">colore</div><div class="t m" style="left:30px;width:23px;text-align:center;top:659px">1</div><div class="t m" style="left:57px;width:126px;text-align:left;top:659px">Argille</div><div class="t m" style="left:187px;width:37px;text-align:right;top:659px">1900</div><div class="t m" style="left:227px;width:37px;text-align:right;top:659px">2000</div><div class="t m" style="left:267px;width:37px;text-align:right;top:659px">0,40</div><div class="t m" style="left:307px;width:37px;text-align:right;top:659px">0,0</div><div class="t m" style="left:347px;width:37px;text-align:right;top:659px">0,20</div><div class="t m" style="left:387px;width:37px;text-align:right;top:659px">0,0</div><div class="t m" style="left:427px;width:37px;text-align:right;top:659px">250</div><div class="t m" style="left:467px;width:37px;text-align:right;top:659px">0,20</div><div class="t m" style="left:529px;width:37px;text-align:right;top:659px">8,7</div><div class="t m" style="left:571px;width:36px;text-align:left;top:659px">argilla</div><div class="a" style="left:510px;top:659px;width:11px;height:11px;background:#fff;border-top:2px solid #8a8a8a;border-left:2px solid #8a8a8a;border-right:1px solid #e0e0e0;border-bottom:1px solid #e0e0e0"></div><div class="a" style="left:609px;top:658px;width:13px;height:13px;background:linear-gradient(90deg,#f4f2e8,#e4e0d0)"></div><svg style="left:612px;top:665px" width="6" height="4"><path d="M0 0 H6 L3 3 Z" fill="#000"/></svg><div class="a" style="left:623px;top:658px;width:26px;height:14px;background:#3c8ad0"></div><div class="a" style="left:649px;top:658px;width:13px;height:13px;background:linear-gradient(90deg,#f4f2e8,#e4e0d0)"></div><svg style="left:652px;top:665px" width="6" height="4"><path d="M0 0 H6 L3 3 Z" fill="#000"/></svg><div class="t m" style="left:30px;width:23px;text-align:center;top:673px">2</div><div class="t m" style="left:57px;width:126px;text-align:left;top:673px">Limi</div><div class="t m" style="left:187px;width:37px;text-align:right;top:673px">1900</div><div class="t m" style="left:227px;width:37px;text-align:right;top:673px">2000</div><div class="t m" style="left:267px;width:37px;text-align:right;top:673px">0,10</div><div class="t m" style="left:307px;width:37px;text-align:right;top:673px">22,0</div><div class="t m" style="left:347px;width:37px;text-align:right;top:673px">0,05</div><div class="t m" style="left:387px;width:37px;text-align:right;top:673px">16,5</div><div class="t m" style="left:427px;width:37px;text-align:right;top:673px">140</div><div class="t m" style="left:467px;width:37px;text-align:right;top:673px">0,30</div><div class="t m" style="left:529px;width:37px;text-align:right;top:673px">5,1</div><div class="t m" style="left:571px;width:36px;text-align:left;top:673px">limo</div><div class="a" style="left:510px;top:673px;width:11px;height:11px;background:#fff;border-top:2px solid #8a8a8a;border-left:2px solid #8a8a8a;border-right:1px solid #e0e0e0;border-bottom:1px solid #e0e0e0"></div><div class="a" style="left:609px;top:672px;width:13px;height:13px;background:linear-gradient(90deg,#f4f2e8,#e4e0d0)"></div><svg style="left:612px;top:679px" width="6" height="4"><path d="M0 0 H6 L3 3 Z" fill="#000"/></svg><div class="a" style="left:623px;top:672px;width:26px;height:14px;background:#b0c8b8"></div><div class="a" style="left:649px;top:672px;width:13px;height:13px;background:linear-gradient(90deg,#f4f2e8,#e4e0d0)"></div><svg style="left:652px;top:679px" width="6" height="4"><path d="M0 0 H6 L3 3 Z" fill="#000"/></svg><div class="t m" style="left:30px;width:23px;text-align:center;top:687px">3</div><div class="t m" style="left:57px;width:126px;text-align:left;top:687px">Sabbie</div><div class="t m" style="left:187px;width:37px;text-align:right;top:687px">1900</div><div class="t m" style="left:227px;width:37px;text-align:right;top:687px">2000</div><div class="t m" style="left:267px;width:37px;text-align:right;top:687px">0,06</div><div class="t m" style="left:307px;width:37px;text-align:right;top:687px">32,0</div><div class="t m" style="left:347px;width:37px;text-align:right;top:687px">0,03</div><div class="t m" style="left:387px;width:37px;text-align:right;top:687px">32,0</div><div class="t m" style="left:427px;width:37px;text-align:right;top:687px">240</div><div class="t m" style="left:467px;width:37px;text-align:right;top:687px">0,25</div><div class="t m" style="left:529px;width:37px;text-align:right;top:687px">8,5</div><div class="t m" style="left:571px;width:36px;text-align:left;top:687px">sabbia</div><div class="a" style="left:510px;top:687px;width:11px;height:11px;background:#fff;border-top:2px solid #8a8a8a;border-left:2px solid #8a8a8a;border-right:1px solid #e0e0e0;border-bottom:1px solid #e0e0e0"></div><div class="a" style="left:609px;top:686px;width:13px;height:13px;background:linear-gradient(90deg,#f4f2e8,#e4e0d0)"></div><svg style="left:612px;top:693px" width="6" height="4"><path d="M0 0 H6 L3 3 Z" fill="#000"/></svg><div class="a" style="left:623px;top:686px;width:26px;height:14px;background:#5f9068"></div><div class="a" style="left:649px;top:686px;width:13px;height:13px;background:linear-gradient(90deg,#f4f2e8,#e4e0d0)"></div><svg style="left:652px;top:693px" width="6" height="4"><path d="M0 0 H6 L3 3 Z" fill="#000"/></svg><div class="t m" style="left:30px;width:23px;text-align:center;top:701px">4</div><div class="t m" style="left:57px;width:126px;text-align:left;top:701px">Ghiaie</div><div class="t m" style="left:187px;width:37px;text-align:right;top:701px">1900</div><div class="t m" style="left:227px;width:37px;text-align:right;top:701px">2000</div><div class="t m" style="left:267px;width:37px;text-align:right;top:701px">0,00</div><div class="t m" style="left:307px;width:37px;text-align:right;top:701px">36,0</div><div class="t m" style="left:347px;width:37px;text-align:right;top:701px">0,00</div><div class="t m" style="left:387px;width:37px;text-align:right;top:701px">27,0</div><div class="t m" style="left:427px;width:37px;text-align:right;top:701px">240</div><div class="t m" style="left:467px;width:37px;text-align:right;top:701px">0,30</div><div class="t m" style="left:529px;width:37px;text-align:right;top:701px">8,8</div><div class="t m" style="left:571px;width:36px;text-align:left;top:701px">ghiaia</div><div class="a" style="left:510px;top:701px;width:11px;height:11px;background:#fff;border-top:2px solid #8a8a8a;border-left:2px solid #8a8a8a;border-right:1px solid #e0e0e0;border-bottom:1px solid #e0e0e0"></div><div class="a" style="left:609px;top:700px;width:13px;height:13px;background:linear-gradient(90deg,#f4f2e8,#e4e0d0)"></div><svg style="left:612px;top:707px" width="6" height="4"><path d="M0 0 H6 L3 3 Z" fill="#000"/></svg><div class="a" style="left:623px;top:700px;width:26px;height:14px;background:#ece89c"></div><div class="a" style="left:649px;top:700px;width:13px;height:13px;background:linear-gradient(90deg,#f4f2e8,#e4e0d0)"></div><svg style="left:652px;top:707px" width="6" height="4"><path d="M0 0 H6 L3 3 Z" fill="#000"/></svg><div class="t m" style="left:30px;width:23px;text-align:center;top:715px">5</div><div class="t m" style="left:57px;width:126px;text-align:left;top:715px">Sostrato roccioso</div><div class="t m" style="left:187px;width:37px;text-align:right;top:715px">2000</div><div class="t m" style="left:227px;width:37px;text-align:right;top:715px">2100</div><div class="t m" style="left:267px;width:37px;text-align:right;top:715px">1,00</div><div class="t m" style="left:307px;width:37px;text-align:right;top:715px">40,0</div><div class="t m" style="left:347px;width:37px;text-align:right;top:715px">0,50</div><div class="t m" style="left:387px;width:37px;text-align:right;top:715px">30,0</div><div class="t m" style="left:427px;width:37px;text-align:right;top:715px">1200</div><div class="t m" style="left:467px;width:37px;text-align:right;top:715px">0,30</div><div class="t m" style="left:529px;width:37px;text-align:right;top:715px">44,0</div><div class="t m" style="left:571px;width:36px;text-align:left;top:715px">roccia</div><div class="a" style="left:510px;top:715px;width:11px;height:11px;background:#fff;border-top:2px solid #8a8a8a;border-left:2px solid #8a8a8a;border-right:1px solid #e0e0e0;border-bottom:1px solid #e0e0e0"></div><div class="a" style="left:609px;top:714px;width:13px;height:13px;background:linear-gradient(90deg,#f4f2e8,#e4e0d0)"></div><svg style="left:612px;top:721px" width="6" height="4"><path d="M0 0 H6 L3 3 Z" fill="#000"/></svg><div class="a" style="left:623px;top:714px;width:26px;height:14px;background:#d8cc30"></div><div class="a" style="left:649px;top:714px;width:13px;height:13px;background:linear-gradient(90deg,#f4f2e8,#e4e0d0)"></div><svg style="left:652px;top:721px" width="6" height="4"><path d="M0 0 H6 L3 3 Z" fill="#000"/></svg><svg style="left:20px;top:660px" width="6" height="10"><path d="M0 0 L6 5 L0 10 Z" fill="#000"/></svg>
</body></html>
